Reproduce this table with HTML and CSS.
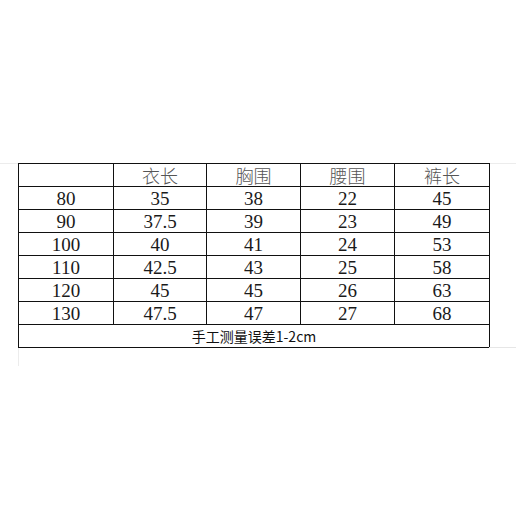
FILE: index.html
```html
<!DOCTYPE html>
<html lang="zh">
<head>
<meta charset="utf-8">
<link rel="stylesheet" href="styles.css">
</head>
<body>
<div class="sheet">
  <table class="size">
    <colgroup>
      <col class="c1"><col class="c2"><col class="c3"><col class="c4"><col class="c5">
    </colgroup>
    <thead>
      <tr><th></th><th>衣长</th><th>胸围</th><th>腰围</th><th>裤长</th></tr>
    </thead>
    <tbody>
      <tr><td>80</td><td>35</td><td>38</td><td>22</td><td>45</td></tr>
      <tr><td>90</td><td>37.5</td><td>39</td><td>23</td><td>49</td></tr>
      <tr><td>100</td><td>40</td><td>41</td><td>24</td><td>53</td></tr>
      <tr><td>110</td><td>42.5</td><td>43</td><td>25</td><td>58</td></tr>
      <tr><td>120</td><td>45</td><td>45</td><td>26</td><td>63</td></tr>
      <tr><td>130</td><td>47.5</td><td>47</td><td>27</td><td>68</td></tr>
      <tr><td class="note" colspan="5">手工测量误差1-2cm</td></tr>
    </tbody>
  </table>
</div>
</body>
</html>
```

FILE: styles.css
```css
html, body {
  margin: 0;
  padding: 0;
  background: #ffffff;
}

.sheet {
  position: relative;
  margin-top: 163px;
  padding-left: 18px;
  border-top: 1px solid #ececec;
  height: 210px;
}

.sheet::before {
  content: "";
  position: absolute;
  left: 18px;
  top: 184px;
  width: 1px;
  height: 18px;
  background: #ececec;
}

.sheet::after {
  content: "";
  position: absolute;
  left: 489px;
  top: 183px;
  width: 27px;
  height: 1px;
  background: #e6e6e6;
}

.size {
  border-collapse: collapse;
  width: 471px;
  margin-top: -1px;
  table-layout: fixed;
  color: #1a1a1a;
}

.c1 { width: 95px; }
.c2 { width: 93px; }
.c3 { width: 94px; }
.c4 { width: 94px; }
.c5 { width: 95px; }

.size th,
.size td {
  border: 1px solid #111;
  padding: 0;
  text-align: center;
  vertical-align: middle;
}

.size th {
  font-family: "Noto Sans CJK SC", sans-serif;
  font-weight: 300;
  font-size: 18px;
  color: #555;
  line-height: 22px;
  height: 22px;
}

.size td {
  font-family: "Liberation Serif", serif;
  font-size: 19px;
  line-height: 20px;
  padding-top: 2px;
  height: 20px;
}

.size td.note {
  font-family: "Noto Sans CJK SC", sans-serif;
  font-size: 14px;
  color: #111;
  padding-top: 0;
  line-height: 22px;
  height: 22px;
}
```
